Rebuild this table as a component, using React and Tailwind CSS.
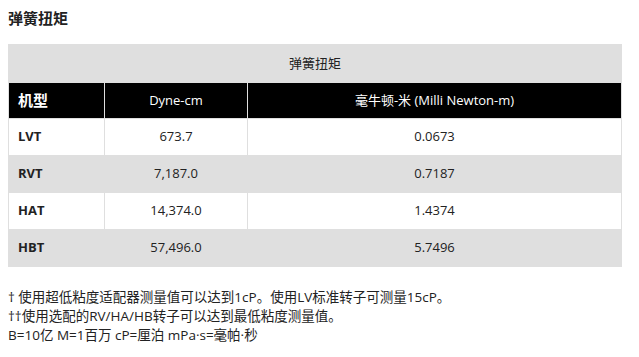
const rows = [
  { model: "LVT", dyne: "673.7", mn: "0.0673" },
  { model: "RVT", dyne: "7,187.0", mn: "0.7187" },
  { model: "HAT", dyne: "14,374.0", mn: "1.4374" },
  { model: "HBT", dyne: "57,496.0", mn: "5.7496" },
];

export default function App() {
  return (
    <div className="w-[639px] h-[357px] bg-white px-2 pt-[8px] text-[#222] font-['Open_Sans','Noto_Sans_CJK_SC',sans-serif]">
      <h3 className="text-[15px] font-bold leading-[20px]">弹簧扭矩</h3>

      <table className="mt-[16px] w-[614px] border-collapse text-[13px] text-center">
        <thead>
          <tr className="bg-[#dfdfdf] h-[38px]">
            <th colSpan={3} className="font-normal border border-[#dfdfdf]">
              弹簧扭矩
            </th>
          </tr>
          <tr className="bg-black text-white h-[36px]">
            <th className="w-[96px] text-left pl-[9px] text-[15px] font-bold border-x border-[#dfdfdf]">
              机型
            </th>
            <th className="w-[143px] font-normal border-x border-[#dfdfdf]">Dyne-cm</th>
            <th className="font-normal border-x border-[#dfdfdf]">毫牛顿-米 (Milli Newton-m)</th>
          </tr>
        </thead>
        <tbody>
          {rows.map((r, i) => (
            <tr
              key={r.model}
              className={`h-[37px] ${i % 2 === 0 ? "bg-white" : "bg-[#dfdfdf]"}`}
            >
              <td className="text-left pl-[9px] font-bold border border-[#dfdfdf]">{r.model}</td>
              <td className="border border-[#dfdfdf]">{r.dyne}</td>
              <td className="border border-[#dfdfdf]">{r.mn}</td>
            </tr>
          ))}
        </tbody>
      </table>

      <div className="mt-[21px] text-[13.5px] leading-[19px]">
        <p>† 使用超低粘度适配器测量值可以达到1cP。使用LV标准转子可测量15cP。</p>
        <p>††使用选配的RV/HA/HB转子可以达到最低粘度测量值。</p>
        <p>B=10亿 M=1百万 cP=厘泊 mPa·s=毫帕·秒</p>
      </div>
    </div>
  );
}
